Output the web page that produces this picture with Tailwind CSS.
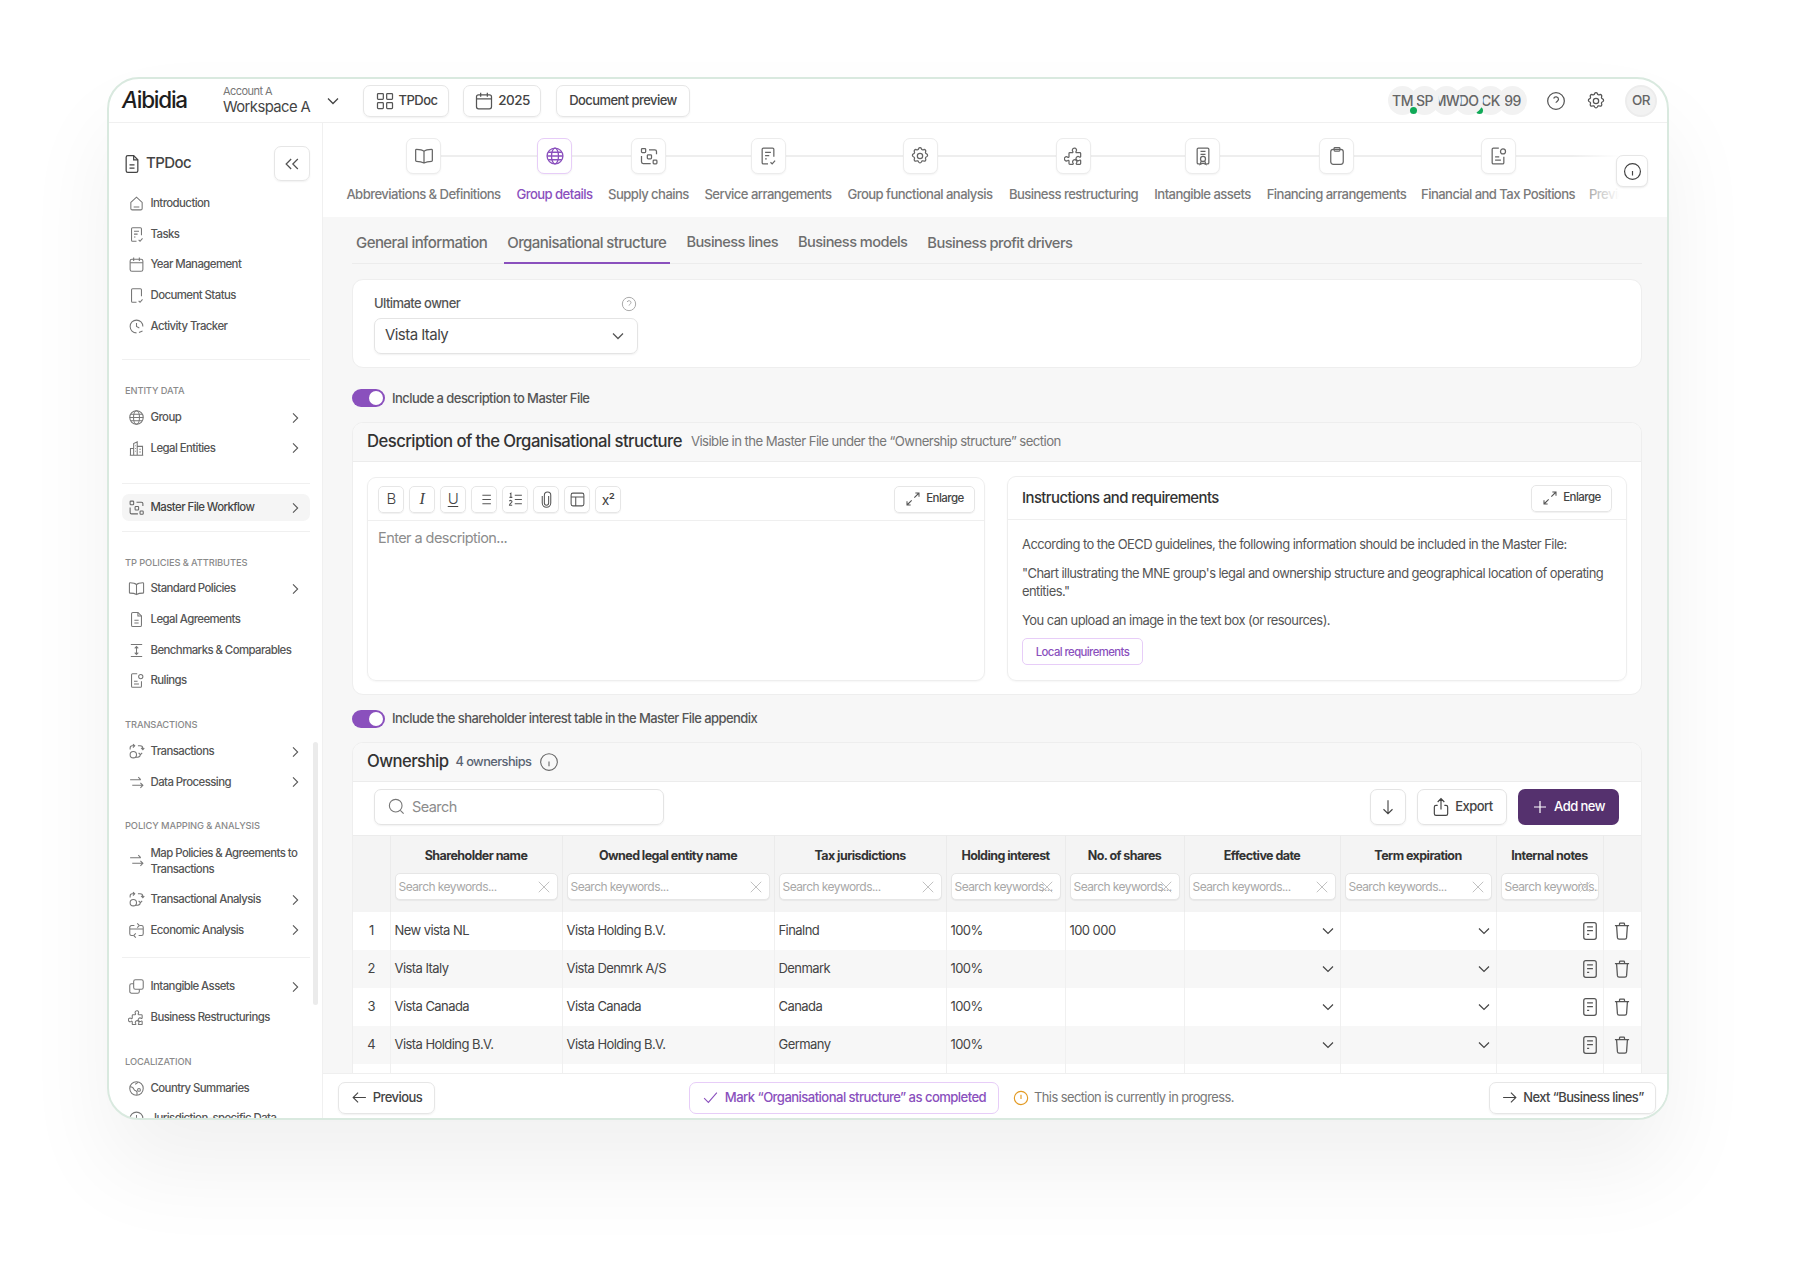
<!DOCTYPE html>
<html lang="en">
<head>
  <meta charset="UTF-8">
  <title>TPDoc - Organisational structure</title>
  <script src="https://cdn.jsdelivr.net/npm/@tailwindcss/browser@4"></script>
</head>
<body class="bg-white font-['Inter',sans-serif] tracking-[-0.035em] text-[#444] w-[1800px] h-[1282px] overflow-hidden pt-[77px] pl-[107px]">

  <!-- icon sprite -->
  <svg class="hidden" fill="none" stroke="currentColor" stroke-width="1.6" stroke-linecap="round" stroke-linejoin="round">
    <symbol id="i-grid" viewBox="0 0 24 24"><rect x="3" y="3" width="7" height="7" rx="1"/><rect x="14" y="3" width="7" height="7" rx="1"/><rect x="3" y="14" width="7" height="7" rx="1"/><rect x="14" y="14" width="7" height="7" rx="1"/></symbol>
    <symbol id="i-cal" viewBox="0 0 24 24"><rect x="3" y="4.5" width="18" height="17" rx="2.5"/><path d="M8 2v5M16 2v5M3 9.5h18"/></symbol>
    <symbol id="i-down" viewBox="0 0 24 24"><path d="M6 9l6 6 6-6"/></symbol>
    <symbol id="i-right" viewBox="0 0 24 24"><path d="M9 5l7 7-7 7"/></symbol>
    <symbol id="i-chevs" viewBox="0 0 24 24"><path d="M11 6l-6 6 6 6M19 6l-6 6 6 6"/></symbol>
    <symbol id="i-file" viewBox="0 0 24 24"><path d="M14 2H7a2 2 0 0 0-2 2v16a2 2 0 0 0 2 2h10a2 2 0 0 0 2-2V7z"/><path d="M14 2v5h5M9 13h6M9 17h6"/></symbol>
    <symbol id="i-home" viewBox="0 0 24 24"><path d="M4 10.5 12 3l8 7.5V19a2 2 0 0 1-2 2H6a2 2 0 0 1-2-2z"/><path d="M8 17h8"/></symbol>
    <symbol id="i-tasks" viewBox="0 0 24 24"><path d="M19 13V4a1.5 1.5 0 0 0-1.500-1.500H6.500A1.500 1.500 0 0 0 5 4v16a1.500 1.500 0 0 0 1.500 1.500H12"/><path d="M8.500 7.500h7M8.500 11.500h5M8.500 15.500h2M15 19.500l2 2 3.500-4"/></symbol>
    <symbol id="i-status" viewBox="0 0 24 24"><path d="M19 13V4a1.500 1.500 0 0 0-1.500-1.500H6.500A1.500 1.500 0 0 0 5 4v16a1.500 1.500 0 0 0 1.500 1.500H12"/><path d="M15 19.500l2 2 3.500-4"/></symbol>
    <symbol id="i-clock" viewBox="0 0 24 24"><path d="M21 12a9 9 0 1 0-9 9"/><path d="M12 7v5l4 2M15.500 20.500l5-2"/></symbol>
    <symbol id="i-globe" viewBox="0 0 24 24"><circle cx="12" cy="12" r="9.500"/><ellipse cx="12" cy="12" rx="4.200" ry="9.500"/><path d="M2.500 12h19M3.800 7.500h16.400M3.800 16.500h16.400"/></symbol>
    <symbol id="i-build" viewBox="0 0 24 24"><path d="M2.500 21.500h19M8 21.500V5l5-2.500v19M13 9h7.500v12.500M8 12H3.500v9.500M10 8h1M10 12h1M10 16h1M16 13h2M16 17h2"/></symbol>
    <symbol id="i-flow" viewBox="0 0 24 24"><rect x="3" y="3" width="5" height="5" rx="1"/><rect x="10" y="10.500" width="5" height="5" rx="1"/><rect x="17" y="17" width="4.500" height="4.500" rx="1"/><path d="M12 4.500h7a2 2 0 0 1 2 2V10M3 12v7a2 2 0 0 0 2 2h9"/></symbol>
    <symbol id="i-book" viewBox="0 0 24 24"><path d="M12 6.500C10 4.500 7 4 3 4a1 1 0 0 0-1 1v12.500a1 1 0 0 0 1 1c3.500 0 6.500.5 9 2 2.500-1.500 5.500-2 9-2a1 1 0 0 0 1-1V5a1 1 0 0 0-1-1c-4 0-7 .5-9 2.500zM12 6.500v14"/></symbol>
    <symbol id="i-bench" viewBox="0 0 24 24"><path d="M4 3.500h16M4 20.500h16M12 7v10M9.500 9 12 6.500 14.500 9M9.500 15l2.500 2.500 2.500-2.500"/></symbol>
    <symbol id="i-ruling" viewBox="0 0 24 24"><path d="M13 2.500H6.500A1.500 1.500 0 0 0 5 4v16a1.500 1.500 0 0 0 1.500 1.500h11A1.500 1.500 0 0 0 19 20V13"/><circle cx="18" cy="6.500" r="3"/><path d="M8.500 13h5M8.500 17h7"/></symbol>
    <symbol id="i-trans" viewBox="0 0 24 24"><circle cx="7.500" cy="16.500" r="4.500"/><path d="M14 4h3a4 4 0 0 1 4 4v1M18.500 7 21 9.500 23 7M10 20h3.500a4 4 0 0 0 4-4M3 9V7a3 3 0 0 1 3-3h3M7 1.500 9.500 4 7 6.500M20 14l-2.500 2.500L15 14"/></symbol>
    <symbol id="i-arrows" viewBox="0 0 24 24"><path d="M3 8h15M14.500 4.500 18 8M6 16h15M17.500 12.500 21 16l-3.500 3.500"/></symbol>
    <symbol id="i-econ" viewBox="0 0 24 24"><path d="M9 5H5a2.500 2.500 0 0 0-2.500 2.500v9A2.500 2.500 0 0 0 5 19h2M15 19h4a2.500 2.500 0 0 0 2.500-2.500v-9A2.500 2.500 0 0 0 19 5h-2M2.500 10h19M13 2l3 3-3 3M11 16l-3 3 3 3"/></symbol>
    <symbol id="i-copy" viewBox="0 0 24 24"><rect x="8" y="2.500" width="13.500" height="13.500" rx="2.500"/><path d="M8 8H5a2.500 2.500 0 0 0-2.500 2.500V19A2.500 2.500 0 0 0 5 21.500h8.500A2.500 2.500 0 0 0 16 19v-3"/></symbol>
    <symbol id="i-puzzle" viewBox="0 0 24 24"><path d="M10 5a2.500 2.500 0 1 1 4.500 1.500c-.4.6-.2 1.500.6 1.500H19a1 1 0 0 1 1 1v3.500c0 .8-.9 1.100-1.500.6a2.500 2.500 0 1 0 0 4c.6-.5 1.500-.2 1.500.6V21a1 1 0 0 1-1 1h-3.500c-.8 0-1.100-.9-.6-1.500a2.500 2.500 0 1 0-4 0c.5.6.2 1.500-.6 1.500H7a1 1 0 0 1-1-1v-3c0-.8-.9-1.100-1.500-.6a2.500 2.500 0 1 1 0-4c.6.5 1.500.2 1.500-.6V9a1 1 0 0 1 1-1h2.900c.8 0 1-.9.6-1.500A2.500 2.500 0 0 1 10 5z"/></symbol>
    <symbol id="i-country" viewBox="0 0 24 24"><circle cx="12" cy="12" r="9.500"/><path d="M3 9.500c3 0 4.500 1 5 3s2 2.500 3.500 3 1.500 3 1 5.500M14 3c-1 2-2.500 2.500-4 3"/><circle cx="15.500" cy="14" r="2"/></symbol>
    <symbol id="i-cert" viewBox="0 0 24 24"><path d="M8 21.500H6.500A1.500 1.500 0 0 1 5 20V4a1.500 1.500 0 0 1 1.500-1.500h11A1.500 1.500 0 0 1 19 4v16a1.500 1.500 0 0 1-1.500 1.500H16"/><path d="M9 6.500h6M9 10h6"/><circle cx="12" cy="15.500" r="3"/><path d="m10 18-1.500 4 3.500-1.500 3.500 1.500L14 18"/></symbol>
    <symbol id="i-clip" viewBox="0 0 24 24"><rect x="4.500" y="4" width="15" height="18" rx="3"/><rect x="8.500" y="2" width="7" height="4" rx="1"/></symbol>
    <symbol id="i-gear" viewBox="0 0 24 24"><circle cx="12" cy="12" r="3.200"/><path d="M10.300 3.300a1.800 1.800 0 0 1 3.400 0 1.800 1.800 0 0 0 2.700 1.100 1.800 1.800 0 0 1 2.400 2.400 1.800 1.800 0 0 0 1.100 2.700 1.800 1.800 0 0 1 0 3.400 1.800 1.800 0 0 0-1.100 2.700 1.800 1.800 0 0 1-2.400 2.400 1.800 1.800 0 0 0-2.700 1.100 1.800 1.800 0 0 1-3.400 0 1.800 1.800 0 0 0-2.700-1.100 1.800 1.800 0 0 1-2.400-2.400 1.800 1.800 0 0 0-1.100-2.700 1.800 1.800 0 0 1 0-3.400 1.800 1.800 0 0 0 1.100-2.700 1.800 1.800 0 0 1 2.400-2.400 1.800 1.800 0 0 0 2.700-1.100z"/></symbol>
    <symbol id="i-help" viewBox="0 0 24 24"><circle cx="12" cy="12" r="10"/><path d="M9.200 9a3 3 0 0 1 5.800 1c0 2-3 2.800-3 4.200M12 17.500h.01"/></symbol>
    <symbol id="i-info" viewBox="0 0 24 24"><circle cx="12" cy="12" r="10"/><path d="M12 11.500v5.500M12 7.500h.01"/></symbol>
    <symbol id="i-list" viewBox="0 0 24 24"><path d="M9 6h12M9 12h12M9 18h12M4 6h.01M4 12h.01M4 18h.01"/></symbol>
    <symbol id="i-olist" viewBox="0 0 24 24"><path d="M11 6h10M11 12h10M11 18h10M4 4l1.500-1v6M3.500 9h4M3.500 14.500a1.800 1.800 0 0 1 3.500.5c0 1.500-3.500 3-3.500 5h3.800"/></symbol>
    <symbol id="i-attach" viewBox="0 0 24 24"><path d="M15 7v10a3 3 0 0 1-6 0V6a4.500 4.500 0 0 1 9 0v11a6 6 0 0 1-12 0V7"/></symbol>
    <symbol id="i-table" viewBox="0 0 24 24"><rect x="3" y="3" width="18" height="18" rx="2.500"/><path d="M3 8.500h18M9.500 8.500V21"/></symbol>
    <symbol id="i-expand" viewBox="0 0 24 24"><path d="M14 10l7-7M15.500 3H21v5.500M10 14l-7 7M8.500 21H3v-5.500"/></symbol>
    <symbol id="i-search" viewBox="0 0 24 24"><circle cx="11" cy="11" r="8"/><path d="m21 21-4.200-4.200"/></symbol>
    <symbol id="i-x" viewBox="0 0 24 24"><path d="M5 5l14 14M19 5 5 19"/></symbol>
    <symbol id="i-adown" viewBox="0 0 24 24"><path d="M12 3v18M6 15l6 6 6-6"/></symbol>
    <symbol id="i-share" viewBox="0 0 24 24"><path d="M8 10H6a2 2 0 0 0-2 2v8a2 2 0 0 0 2 2h12a2 2 0 0 0 2-2v-8a2 2 0 0 0-2-2h-2M12 15V2M8 6l4-4 4 4"/></symbol>
    <symbol id="i-plus" viewBox="0 0 24 24"><path d="M12 3v18M3 12h18"/></symbol>
    <symbol id="i-note" viewBox="0 0 24 24"><rect x="4.500" y="2" width="15" height="20" rx="2.500"/><path d="M8.500 7h7M8.500 11.500h7M8.500 16h2.500"/></symbol>
    <symbol id="i-trash" viewBox="0 0 24 24"><path d="M3.500 5.500h17M9 5.500V3.500a1 1 0 0 1 1-1h4a1 1 0 0 1 1 1v2M5.500 5.500 6.500 20a2 2 0 0 0 2 1.800h7a2 2 0 0 0 2-1.800l1-14.500"/></symbol>
    <symbol id="i-aleft" viewBox="0 0 24 24"><path d="M21 12H3M10 5l-7 7 7 7"/></symbol>
    <symbol id="i-aright" viewBox="0 0 24 24"><path d="M3 12h18M14 5l7 7-7 7"/></symbol>
    <symbol id="i-check" viewBox="0 0 24 24"><path d="M3 13l6 6L21 5"/></symbol>
    <symbol id="i-alert" viewBox="0 0 24 24"><circle cx="12" cy="12" r="10"/><path d="M12 7v6.500M12 17h.01"/></symbol>
  </svg>

  <!-- app frame -->
  <div class="w-[1562px] h-[1043px] rounded-[32px] border-2 border-[#d9e9df] bg-white overflow-hidden flex flex-col shadow-[0_50px_90px_rgba(0,0,0,0.06)]">

    <!-- top bar -->
    <header class="h-[44px] shrink-0 border-b border-[#f0f0f0] flex items-center">
      <div class="w-[114px] pl-[13px] text-[22.500px] leading-none font-medium text-[#1e1e1e] tracking-[-0.055em]"><span class="italic">A</span>ibidia</div>
      <div class="w-[100px]">
        <div class="text-[11px] leading-[13px] text-[#777]">Account A</div>
        <div class="text-[14.800px] leading-[19px] text-[#444] whitespace-nowrap">Workspace A</div>
      </div>
      <svg class="w-[20px] h-[20px] text-[#444]" fill="none" stroke="currentColor" stroke-width="1.500"><use href="#i-down"/></svg>
      <button class="ml-[20px] w-[86px] h-[32px] rounded-[7px] border border-[#e6e6e6] shadow-[0_1px_2px_rgba(0,0,0,0.06)] flex items-center justify-center gap-[4px] text-[13px] font-medium text-[#444]"><svg class="w-[20px] h-[20px] text-[#555]" fill="none" stroke="currentColor" stroke-width="1.500"><use href="#i-grid"/></svg>TPDoc</button>
      <button class="ml-[14px] w-[78px] h-[32px] rounded-[7px] border border-[#e6e6e6] shadow-[0_1px_2px_rgba(0,0,0,0.06)] flex items-center justify-center gap-[4px] text-[13.500px] font-medium text-[#444]"><svg class="w-[20px] h-[20px] text-[#555]" fill="none" stroke="currentColor" stroke-width="1.500"><use href="#i-cal"/></svg>2025</button>
      <button class="ml-[15px] w-[134px] h-[32px] rounded-[7px] border border-[#e6e6e6] shadow-[0_1px_2px_rgba(0,0,0,0.06)] text-[13px] font-medium text-[#444]">Document preview</button>

      <div class="ml-auto flex items-center pr-[10px]">
        <div class="flex">
          <div class="relative z-[6] w-[29px] h-[29px] rounded-full bg-[#f2f2f2] flex items-center justify-center text-[14px] font-medium text-[#666]">TM<span class="absolute left-[22px] top-[21px] w-[7px] h-[7px] rounded-full bg-[#10a957]"></span></div>
          <div class="relative z-[5] -ml-[7px] w-[29px] h-[29px] rounded-full bg-[#f2f2f2] flex items-center justify-center overflow-hidden text-[14px] font-medium text-[#666]">SP</div>
          <div class="relative z-[4] -ml-[7px] w-[29px] h-[29px] rounded-full bg-[#f2f2f2] flex items-center justify-center overflow-hidden text-[14px] font-medium text-[#666]">MW</div>
          <div class="relative z-[3] -ml-[7px] w-[29px] h-[29px] rounded-full bg-[#f2f2f2] flex items-center justify-center overflow-hidden text-[14px] font-medium text-[#666]">DO</div>
          <div class="relative z-[2] -ml-[7px] w-[29px] h-[29px] rounded-full bg-[#f2f2f2] flex items-center justify-center text-[14px] font-medium text-[#666]">CK<span class="absolute left-[0px] top-[21px] w-[7px] h-[7px] rounded-full bg-[#10a957]"></span></div>
          <div class="relative z-[1] -ml-[7px] w-[29px] h-[29px] rounded-full bg-[#f2f2f2] flex items-center justify-center text-[14px] font-medium text-[#666]">99</div>
        </div>
        <svg class="ml-[19px] w-[20px] h-[20px] text-[#555]" fill="none" stroke="currentColor" stroke-width="1.500"><use href="#i-help"/></svg>
        <svg class="ml-[20px] w-[20px] h-[20px] text-[#555]" fill="none" stroke="currentColor" stroke-width="1.500"><use href="#i-gear"/></svg>
        <div class="ml-[19px] w-[32px] h-[32px] rounded-full bg-[#f2f2f2] border-2 border-[#ececec] flex items-center justify-center text-[13.500px] font-medium text-[#666]">OR</div>
      </div>
    </header>

    <div class="flex flex-1 min-h-0">

      <!-- sidebar -->
      <aside class="relative w-[214px] shrink-0 border-r border-[#f0f0f0] pl-[13px] pr-[12px] overflow-hidden">
        <div class="flex items-center justify-between pt-[23px]">
          <div class="flex items-center gap-[4px] text-[15px] font-medium text-[#444]"><svg class="w-[20px] h-[20px] text-[#444]" fill="none" stroke="currentColor" stroke-width="1.500"><use href="#i-file"/></svg>TPDoc</div>
          <button class="w-[36px] h-[35px] rounded-[7px] border border-[#e6e6e6] shadow-[0_1px_2px_rgba(0,0,0,0.06)] flex items-center justify-center"><svg class="w-[20px] h-[20px] text-[#555]" fill="none" stroke="currentColor" stroke-width="1.500"><use href="#i-chevs"/></svg></button>
        </div>
        <nav class="mt-[7px] text-[11.400px] font-medium text-[#555]">
          <div class="flex items-center h-[30.750px] pl-[5.500px] gap-[6px]"><svg class="w-[17px] h-[17px] text-[#777]" fill="none" stroke="currentColor" stroke-width="1.500"><use href="#i-home"/></svg>Introduction</div>
          <div class="flex items-center h-[30.750px] pl-[5.500px] gap-[6px]"><svg class="w-[17px] h-[17px] text-[#777]" fill="none" stroke="currentColor" stroke-width="1.500"><use href="#i-tasks"/></svg>Tasks</div>
          <div class="flex items-center h-[30.750px] pl-[5.500px] gap-[6px]"><svg class="w-[17px] h-[17px] text-[#777]" fill="none" stroke="currentColor" stroke-width="1.500"><use href="#i-cal"/></svg>Year Management</div>
          <div class="flex items-center h-[30.750px] pl-[5.500px] gap-[6px]"><svg class="w-[17px] h-[17px] text-[#777]" fill="none" stroke="currentColor" stroke-width="1.500"><use href="#i-status"/></svg>Document Status</div>
          <div class="flex items-center h-[30.750px] pl-[5.500px] gap-[6px]"><svg class="w-[17px] h-[17px] text-[#777]" fill="none" stroke="currentColor" stroke-width="1.500"><use href="#i-clock"/></svg>Activity Tracker</div>

          <div class="mt-[17px] h-[1px] bg-[#f0f0f0]"></div>
          <div class="mt-[25px] pl-[3px] h-[12px] leading-[12px] text-[9.300px] font-medium text-[#8a8a8a] tracking-[-0.01em]">ENTITY DATA</div>
          <div class="mt-[5.500px] flex items-center h-[30.750px] pl-[5.500px] pr-[7px] gap-[6px]"><svg class="w-[17px] h-[17px] text-[#777]" fill="none" stroke="currentColor" stroke-width="1.500"><use href="#i-globe"/></svg>Group<svg class="ml-auto w-[16px] h-[16px] text-[#555]" fill="none" stroke="currentColor" stroke-width="1.600"><use href="#i-right"/></svg></div>
          <div class="flex items-center h-[30.750px] pl-[5.500px] pr-[7px] gap-[6px]"><svg class="w-[17px] h-[17px] text-[#777]" fill="none" stroke="currentColor" stroke-width="1.500"><use href="#i-build"/></svg>Legal Entities<svg class="ml-auto w-[16px] h-[16px] text-[#555]" fill="none" stroke="currentColor" stroke-width="1.600"><use href="#i-right"/></svg></div>

          <div class="mt-[19.500px] h-[1px] bg-[#f0f0f0]"></div>
          <div class="mt-[10px] flex items-center h-[27px] pl-[5.500px] pr-[7px] gap-[6px] rounded-[7px] bg-[#f5f5f5] text-[#444]"><svg class="w-[17px] h-[17px] text-[#666]" fill="none" stroke="currentColor" stroke-width="1.500"><use href="#i-flow"/></svg>Master File Workflow<svg class="ml-auto w-[16px] h-[16px] text-[#555]" fill="none" stroke="currentColor" stroke-width="1.600"><use href="#i-right"/></svg></div>
          <div class="mt-[10px] h-[1px] bg-[#f0f0f0]"></div>

          <div class="mt-[25px] pl-[3px] h-[12px] leading-[12px] text-[9.300px] font-medium text-[#8a8a8a] tracking-[-0.01em]">TP POLICIES &amp; ATTRIBUTES</div>
          <div class="mt-[4px] flex items-center h-[30.750px] pl-[5.500px] pr-[7px] gap-[6px]"><svg class="w-[17px] h-[17px] text-[#777]" fill="none" stroke="currentColor" stroke-width="1.500"><use href="#i-book"/></svg>Standard Policies<svg class="ml-auto w-[16px] h-[16px] text-[#555]" fill="none" stroke="currentColor" stroke-width="1.600"><use href="#i-right"/></svg></div>
          <div class="flex items-center h-[30.750px] pl-[5.500px] gap-[6px]"><svg class="w-[17px] h-[17px] text-[#777]" fill="none" stroke="currentColor" stroke-width="1.500"><use href="#i-file"/></svg>Legal Agreements</div>
          <div class="flex items-center h-[30.750px] pl-[5.500px] gap-[6px]"><svg class="w-[17px] h-[17px] text-[#777]" fill="none" stroke="currentColor" stroke-width="1.500"><use href="#i-bench"/></svg>Benchmarks &amp; Comparables</div>
          <div class="flex items-center h-[30.750px] pl-[5.500px] gap-[6px]"><svg class="w-[17px] h-[17px] text-[#777]" fill="none" stroke="currentColor" stroke-width="1.500"><use href="#i-ruling"/></svg>Rulings</div>

          <div class="mt-[23px] pl-[3px] h-[12px] leading-[12px] text-[9.300px] font-medium text-[#8a8a8a] tracking-[-0.01em]">TRANSACTIONS</div>
          <div class="mt-[5px] flex items-center h-[30.750px] pl-[5.500px] pr-[7px] gap-[6px]"><svg class="w-[17px] h-[17px] text-[#777]" fill="none" stroke="currentColor" stroke-width="1.500"><use href="#i-trans"/></svg>Transactions<svg class="ml-auto w-[16px] h-[16px] text-[#555]" fill="none" stroke="currentColor" stroke-width="1.600"><use href="#i-right"/></svg></div>
          <div class="flex items-center h-[30.750px] pl-[5.500px] pr-[7px] gap-[6px]"><svg class="w-[17px] h-[17px] text-[#777]" fill="none" stroke="currentColor" stroke-width="1.500"><use href="#i-arrows"/></svg>Data Processing<svg class="ml-auto w-[16px] h-[16px] text-[#555]" fill="none" stroke="currentColor" stroke-width="1.600"><use href="#i-right"/></svg></div>

          <div class="mt-[22px] pl-[3px] h-[12px] leading-[12px] text-[9.300px] font-medium text-[#8a8a8a] tracking-[-0.01em]">POLICY MAPPING &amp; ANALYSIS</div>
          <div class="flex items-center h-[47.500px] pl-[5.500px] gap-[6px] mt-[5px] leading-[16px]"><svg class="w-[17px] h-[17px] shrink-0 text-[#777]" fill="none" stroke="currentColor" stroke-width="1.500"><use href="#i-arrows"/></svg><span>Map Policies &amp; Agreements to<br>Transactions</span></div>
          <div class="flex items-center h-[30.750px] pl-[5.500px] pr-[7px] gap-[6px]"><svg class="w-[17px] h-[17px] text-[#777]" fill="none" stroke="currentColor" stroke-width="1.500"><use href="#i-trans"/></svg>Transactional Analysis<svg class="ml-auto w-[16px] h-[16px] text-[#555]" fill="none" stroke="currentColor" stroke-width="1.600"><use href="#i-right"/></svg></div>
          <div class="flex items-center h-[30.750px] pl-[5.500px] pr-[7px] gap-[6px]"><svg class="w-[17px] h-[17px] text-[#777]" fill="none" stroke="currentColor" stroke-width="1.500"><use href="#i-econ"/></svg>Economic Analysis<svg class="ml-auto w-[16px] h-[16px] text-[#555]" fill="none" stroke="currentColor" stroke-width="1.600"><use href="#i-right"/></svg></div>

          <div class="mt-[11px] h-[1px] bg-[#f0f0f0]"></div>
          <div class="mt-[13.500px] flex items-center h-[30.750px] pl-[5.500px] pr-[7px] gap-[6px]"><svg class="w-[17px] h-[17px] text-[#777]" fill="none" stroke="currentColor" stroke-width="1.500"><use href="#i-copy"/></svg>Intangible Assets<svg class="ml-auto w-[16px] h-[16px] text-[#555]" fill="none" stroke="currentColor" stroke-width="1.600"><use href="#i-right"/></svg></div>
          <div class="flex items-center h-[30.750px] pl-[5.500px] gap-[6px]"><svg class="w-[17px] h-[17px] text-[#777]" fill="none" stroke="currentColor" stroke-width="1.500"><use href="#i-puzzle"/></svg>Business Restructurings</div>

          <div class="mt-[23px] pl-[3px] h-[12px] leading-[12px] text-[9.300px] font-medium text-[#8a8a8a] tracking-[-0.01em]">LOCALIZATION</div>
          <div class="mt-[5px] flex items-center h-[30.750px] pl-[5.500px] gap-[6px]"><svg class="w-[17px] h-[17px] text-[#777]" fill="none" stroke="currentColor" stroke-width="1.500"><use href="#i-country"/></svg>Country Summaries</div>
          <div class="flex items-center h-[30.750px] pl-[5.500px] gap-[6px]"><svg class="w-[17px] h-[17px] text-[#777]" fill="none" stroke="currentColor" stroke-width="1.500"><use href="#i-clock"/></svg>Jurisdiction-specific Data</div>
        </nav>
        <!-- scrollbar thumb -->
        <div class="absolute right-[4px] top-[619px] w-[5px] h-[263px] rounded-full bg-[#ebebeb]"></div>
      </aside>

      <!-- main column -->
      <div class="flex-1 min-w-0 flex flex-col">

        <!-- stepper -->
        <div class="relative h-[94px] shrink-0 bg-white pl-[23px] pt-[15px] flex gap-[15px] overflow-hidden text-[13.100px] font-medium text-[#7a7a7a] whitespace-nowrap">
          <div class="absolute left-[100px] right-[20px] top-[32px] h-[2px] bg-[#eeeeee]"></div>
          <div class="relative shrink-0 w-[155px] flex flex-col items-center gap-[11px]"><div class="w-[35px] h-[36px] rounded-[7px] bg-white border border-[#ececec] shadow-[0_1px_2px_rgba(0,0,0,0.05)] flex items-center justify-center"><svg class="w-[20px] h-[20px] text-[#666]" fill="none" stroke="currentColor" stroke-width="1.500"><use href="#i-book"/></svg></div>Abbreviations &amp; Definitions</div>
          <div class="relative shrink-0 w-[77px] flex flex-col items-center gap-[11px] text-[#8a50bd]"><div class="w-[35px] h-[36px] rounded-[7px] bg-white border border-[#e7cdf8] shadow-[0_1px_2px_rgba(0,0,0,0.05)] flex items-center justify-center"><svg class="w-[20px] h-[20px] text-[#8a50bd]" fill="none" stroke="currentColor" stroke-width="1.600"><use href="#i-globe"/></svg></div>Group details</div>
          <div class="relative shrink-0 w-[81px] flex flex-col items-center gap-[11px]"><div class="w-[35px] h-[36px] rounded-[7px] bg-white border border-[#ececec] shadow-[0_1px_2px_rgba(0,0,0,0.05)] flex items-center justify-center"><svg class="w-[20px] h-[20px] text-[#666]" fill="none" stroke="currentColor" stroke-width="1.500"><use href="#i-flow"/></svg></div>Supply chains</div>
          <div class="relative shrink-0 w-[128px] flex flex-col items-center gap-[11px]"><div class="w-[35px] h-[36px] rounded-[7px] bg-white border border-[#ececec] shadow-[0_1px_2px_rgba(0,0,0,0.05)] flex items-center justify-center"><svg class="w-[20px] h-[20px] text-[#666]" fill="none" stroke="currentColor" stroke-width="1.500"><use href="#i-tasks"/></svg></div>Service arrangements</div>
          <div class="relative shrink-0 w-[146px] flex flex-col items-center gap-[11px]"><div class="w-[35px] h-[36px] rounded-[7px] bg-white border border-[#ececec] shadow-[0_1px_2px_rgba(0,0,0,0.05)] flex items-center justify-center"><svg class="w-[20px] h-[20px] text-[#666]" fill="none" stroke="currentColor" stroke-width="1.500"><use href="#i-gear"/></svg></div>Group functional analysis</div>
          <div class="relative shrink-0 w-[131px] flex flex-col items-center gap-[11px]"><div class="w-[35px] h-[36px] rounded-[7px] bg-white border border-[#ececec] shadow-[0_1px_2px_rgba(0,0,0,0.05)] flex items-center justify-center"><svg class="w-[20px] h-[20px] text-[#666]" fill="none" stroke="currentColor" stroke-width="1.500"><use href="#i-puzzle"/></svg></div>Business restructuring</div>
          <div class="relative shrink-0 w-[97px] flex flex-col items-center gap-[11px]"><div class="w-[35px] h-[36px] rounded-[7px] bg-white border border-[#ececec] shadow-[0_1px_2px_rgba(0,0,0,0.05)] flex items-center justify-center"><svg class="w-[20px] h-[20px] text-[#666]" fill="none" stroke="currentColor" stroke-width="1.500"><use href="#i-cert"/></svg></div>Intangible assets</div>
          <div class="relative shrink-0 w-[141px] flex flex-col items-center gap-[11px]"><div class="w-[35px] h-[36px] rounded-[7px] bg-white border border-[#ececec] shadow-[0_1px_2px_rgba(0,0,0,0.05)] flex items-center justify-center"><svg class="w-[20px] h-[20px] text-[#666]" fill="none" stroke="currentColor" stroke-width="1.500"><use href="#i-clip"/></svg></div>Financing arrangements</div>
          <div class="relative shrink-0 w-[152px] flex flex-col items-center gap-[11px]"><div class="w-[35px] h-[36px] rounded-[7px] bg-white border border-[#ececec] shadow-[0_1px_2px_rgba(0,0,0,0.05)] flex items-center justify-center"><svg class="w-[20px] h-[20px] text-[#666]" fill="none" stroke="currentColor" stroke-width="1.500"><use href="#i-ruling"/></svg></div>Financial and Tax Positions</div>
          <div class="relative shrink-0 pt-[47px]">Previous</div>
          <!-- right fade and info button sit over the scrolling steps -->
          <div class="absolute right-0 top-0 bottom-0 w-[95px] bg-gradient-to-r from-transparent via-white to-white"></div>
          <button class="absolute left-[1293px] top-[32px] w-[32px] h-[32px] rounded-[7px] bg-white border border-[#e6e6e6] shadow-[0_1px_2px_rgba(0,0,0,0.08)] flex items-center justify-center"><svg class="w-[19px] h-[19px] text-[#444]" fill="none" stroke="currentColor" stroke-width="1.500"><use href="#i-info"/></svg></button>
        </div>

        <!-- scrolling content -->
        <div class="flex-1 min-h-0 bg-[#f7f7f7] pl-[29px] pr-[25px] overflow-hidden">
          <div class="h-[47px] flex items-end gap-[20px] border-b border-[#ececec] text-[15px] font-medium text-[#6e6e6e] pl-[4px] whitespace-nowrap">
            <div class="pb-[9px]">General information</div>
            <div class="relative pb-[9px]">Organisational structure<span class="absolute -left-[3px] -right-[4px] -bottom-[1px] h-[2px] bg-[#8a50bd]"></span></div>
            <div class="pb-[9px] text-[14.600px]">Business lines</div>
            <div class="pb-[9px] text-[14.600px]">Business models</div>
            <div class="pb-[9px] text-[14.700px]">Business profit drivers</div>
          </div>

          <!-- ultimate owner -->
          <div class="mt-[15px] h-[89px] rounded-[11px] bg-white border border-[#eeeeee] pl-[21px] pt-[15px]">
            <div class="w-[263px] flex items-center justify-between h-[18px] text-[13px] font-medium text-[#555]">Ultimate owner<svg class="w-[16px] h-[16px] text-[#aaa]" fill="none" stroke="currentColor" stroke-width="1.500"><use href="#i-help"/></svg></div>
            <div class="mt-[5px] w-[264px] h-[36px] rounded-[7px] border border-[#e4e4e4] shadow-[0_1px_2px_rgba(0,0,0,0.06)] flex items-center justify-between pl-[10px] pr-[9px] pb-[1px] text-[15px] text-[#444]">Vista Italy<svg class="w-[20px] h-[20px] text-[#555]" fill="none" stroke="currentColor" stroke-width="1.500"><use href="#i-down"/></svg></div>
          </div>

          <!-- toggle -->
          <div class="mt-[21px] h-[18px] flex items-center gap-[7px] text-[13px] font-medium text-[#555]">
            <div class="w-[33px] h-[18px] rounded-full bg-[#8a50bd] flex justify-end p-[2px]"><span class="w-[14px] h-[14px] rounded-full bg-white"></span></div><span class="pt-[1px]">Include a description to Master File</span>
          </div>

          <!-- description card -->
          <div class="mt-[15px] h-[273px] rounded-[11px] bg-white border border-[#eeeeee] overflow-hidden">
            <div class="h-[39px] bg-[#f8f8f8] border-b border-[#ececec] flex items-center pl-[14px] gap-[9px] whitespace-nowrap">
              <span class="text-[16.700px] font-medium text-[#333]">Description of the Organisational structure</span>
              <span class="text-[13.200px] text-[#777]">Visible in the Master File under the “Ownership structure” section</span>
            </div>
            <div class="flex pl-[14px] pt-[15px] gap-[22px]">
              <div class="w-[618px] h-[204px] rounded-[9px] border border-[#eeeeee] shadow-[0_1px_2px_rgba(0,0,0,0.04)]">
                <div class="h-[43px] border-b border-[#efefef] flex items-center pl-[10px] pr-[9px] gap-[5px]">
                  <button class="w-[26px] h-[27px] rounded-[5px] border border-[#e6e6e6] shadow-[0_1px_1px_rgba(0,0,0,0.06)] text-[15px] font-light text-[#444]">B</button>
                  <button class="w-[26px] h-[27px] rounded-[5px] border border-[#e6e6e6] shadow-[0_1px_1px_rgba(0,0,0,0.06)] text-[16px] font-['Liberation_Serif',serif] italic text-[#444]">I</button>
                  <button class="w-[26px] h-[27px] rounded-[5px] border border-[#e6e6e6] shadow-[0_1px_1px_rgba(0,0,0,0.06)] text-[15px] font-light underline underline-offset-2 text-[#444]">U</button>
                  <button class="w-[26px] h-[27px] rounded-[5px] border border-[#e6e6e6] shadow-[0_1px_1px_rgba(0,0,0,0.06)] flex items-center justify-center"><svg class="w-[17px] h-[17px] text-[#555]" fill="none" stroke="currentColor" stroke-width="1.500"><use href="#i-list"/></svg></button>
                  <button class="w-[26px] h-[27px] rounded-[5px] border border-[#e6e6e6] shadow-[0_1px_1px_rgba(0,0,0,0.06)] flex items-center justify-center"><svg class="w-[17px] h-[17px] text-[#555]" fill="none" stroke="currentColor" stroke-width="1.500"><use href="#i-olist"/></svg></button>
                  <button class="w-[26px] h-[27px] rounded-[5px] border border-[#e6e6e6] shadow-[0_1px_1px_rgba(0,0,0,0.06)] flex items-center justify-center"><svg class="w-[17px] h-[17px] text-[#555]" fill="none" stroke="currentColor" stroke-width="1.500"><use href="#i-attach"/></svg></button>
                  <button class="w-[26px] h-[27px] rounded-[5px] border border-[#e6e6e6] shadow-[0_1px_1px_rgba(0,0,0,0.06)] flex items-center justify-center"><svg class="w-[17px] h-[17px] text-[#555]" fill="none" stroke="currentColor" stroke-width="1.500"><use href="#i-table"/></svg></button>
                  <button class="w-[26px] h-[27px] rounded-[5px] border border-[#e6e6e6] shadow-[0_1px_1px_rgba(0,0,0,0.06)] text-[14px] text-[#444]">x²</button>
                  <button class="ml-auto w-[81px] h-[27px] rounded-[5px] border border-[#e6e6e6] shadow-[0_1px_1px_rgba(0,0,0,0.06)] flex items-center justify-center gap-[5px] text-[11.500px] font-medium text-[#444]"><svg class="w-[16px] h-[16px] text-[#555]" fill="none" stroke="currentColor" stroke-width="1.600"><use href="#i-expand"/></svg>Enlarge</button>
                </div>
                <div class="pl-[10px] pt-[6px] text-[14.500px] text-[#8c8c8c]">Enter a description...</div>
              </div>
              <div class="w-[620px] h-[205px] -mt-[1px] rounded-[9px] border border-[#eeeeee] shadow-[0_1px_2px_rgba(0,0,0,0.04)]">
                <div class="h-[43px] border-b border-[#efefef] flex items-center justify-between pl-[14px] pr-[14px]">
                  <span class="text-[14.900px] font-medium text-[#333]">Instructions and requirements</span>
                  <button class="w-[81px] h-[27px] rounded-[5px] border border-[#e6e6e6] shadow-[0_1px_1px_rgba(0,0,0,0.06)] flex items-center justify-center gap-[5px] text-[11.500px] font-medium text-[#444]"><svg class="w-[16px] h-[16px] text-[#555]" fill="none" stroke="currentColor" stroke-width="1.600"><use href="#i-expand"/></svg>Enlarge</button>
                </div>
                <div class="pl-[14px] pr-[14px] pt-[15px] text-[12.970px] leading-[18px] text-[#555]">
                  <p>According to the OECD guidelines, the following information should be included in the Master File:</p>
                  <p class="mt-[11px]">"Chart illustrating the MNE group's legal and ownership structure and geographical location of operating entities."</p>
                  <p class="mt-[11px]">You can upload an image in the text box (or resources).</p>
                  <button class="mt-[9px] w-[121px] h-[27px] rounded-[5px] border border-[#e7cdf8] text-[11.300px] font-medium text-[#8a50bd]">Local requirements</button>
                </div>
              </div>
            </div>
          </div>

          <!-- toggle -->
          <div class="mt-[15px] h-[18px] flex items-center gap-[7px] text-[13px] font-medium text-[#555]">
            <div class="w-[33px] h-[18px] rounded-full bg-[#8a50bd] flex justify-end p-[2px]"><span class="w-[14px] h-[14px] rounded-full bg-white"></span></div>Include the shareholder interest table in the Master File appendix
          </div>

          <!-- ownership card -->
          <div class="mt-[14px] rounded-t-[11px] bg-white border border-[#eeeeee] overflow-hidden">
            <div class="h-[39px] bg-[#f8f8f8] border-b border-[#ececec] flex items-center pl-[14px] gap-[7px]">
              <span class="text-[16.700px] font-medium text-[#333]">Ownership</span>
              <span class="text-[12.800px] font-medium text-[#5a6473]">4 ownerships</span>
              <svg class="ml-[1px] w-[20px] h-[20px] text-[#666]" fill="none" stroke="currentColor" stroke-width="1.300"><use href="#i-info"/></svg>
            </div>
            <div class="h-[53px] flex items-center pl-[21px] pr-[22px] pb-[4px]">
              <div class="w-[290px] h-[36px] rounded-[7px] border border-[#e4e4e4] shadow-[0_1px_2px_rgba(0,0,0,0.06)] flex items-center pl-[12px] gap-[6px] text-[14.500px] text-[#8c8c8c]"><svg class="w-[19px] h-[19px] text-[#777]" fill="none" stroke="currentColor" stroke-width="1.400"><use href="#i-search"/></svg>Search</div>
              <button class="ml-auto w-[36px] h-[36px] rounded-[7px] border border-[#e4e4e4] shadow-[0_1px_2px_rgba(0,0,0,0.06)] flex items-center justify-center"><svg class="w-[18px] h-[18px] text-[#444]" fill="none" stroke="currentColor" stroke-width="1.500"><use href="#i-adown"/></svg></button>
              <button class="ml-[11px] w-[90px] h-[36px] rounded-[7px] border border-[#e4e4e4] shadow-[0_1px_2px_rgba(0,0,0,0.06)] flex items-center justify-center gap-[4px] text-[13px] font-medium text-[#444]"><svg class="w-[20px] h-[20px] text-[#444]" fill="none" stroke="currentColor" stroke-width="1.400"><use href="#i-share"/></svg>Export</button>
              <button class="ml-[11px] w-[101px] h-[36px] rounded-[7px] bg-[#55316e] flex items-center justify-center gap-[6px] text-[13px] font-medium text-white"><svg class="w-[16px] h-[16px] text-white" fill="none" stroke="currentColor" stroke-width="1.800"><use href="#i-plus"/></svg>Add new</button>
            </div>
            <table class="w-full table-fixed border-collapse text-[13px] text-[#444]">
              <colgroup>
                <col class="w-[37px]"><col class="w-[172px]"><col class="w-[212px]"><col class="w-[172px]"><col class="w-[119px]"><col class="w-[119px]"><col class="w-[156px]"><col class="w-[156px]"><col class="w-[107px]"><col>
              </colgroup>
              <thead class="bg-[#f4f4f4] border-t border-[#ececec] text-[12.500px] font-semibold text-[#333]">
                <tr class="h-[76px] align-top">
                  <th class="border-r border-[#ebebeb]"></th>
                  <th class="border-r border-[#ebebeb] px-[4px] pt-[12px]"><div class="h-[16px] leading-[16px] mb-[9px]">Shareholder name</div><div class="h-[27px] rounded-[5px] bg-white border border-[#e6e6e6] shadow-[0_1px_1px_rgba(0,0,0,0.05)] flex items-center justify-between pl-[3px] pr-[4px] text-[12px] font-normal text-[#a8a8a8]">Search keywords...<svg class="w-[18px] h-[18px] text-[#bbb]" fill="none" stroke="currentColor" stroke-width="1.200"><use href="#i-x"/></svg></div></th>
                  <th class="border-r border-[#ebebeb] px-[4px] pt-[12px]"><div class="h-[16px] leading-[16px] mb-[9px]">Owned legal entity name</div><div class="h-[27px] rounded-[5px] bg-white border border-[#e6e6e6] shadow-[0_1px_1px_rgba(0,0,0,0.05)] flex items-center justify-between pl-[3px] pr-[4px] text-[12px] font-normal text-[#a8a8a8]">Search keywords...<svg class="w-[18px] h-[18px] text-[#bbb]" fill="none" stroke="currentColor" stroke-width="1.200"><use href="#i-x"/></svg></div></th>
                  <th class="border-r border-[#ebebeb] px-[4px] pt-[12px]"><div class="h-[16px] leading-[16px] mb-[9px]">Tax jurisdictions</div><div class="h-[27px] rounded-[5px] bg-white border border-[#e6e6e6] shadow-[0_1px_1px_rgba(0,0,0,0.05)] flex items-center justify-between pl-[3px] pr-[4px] text-[12px] font-normal text-[#a8a8a8]">Search keywords...<svg class="w-[18px] h-[18px] text-[#bbb]" fill="none" stroke="currentColor" stroke-width="1.200"><use href="#i-x"/></svg></div></th>
                  <th class="border-r border-[#ebebeb] px-[4px] pt-[12px]"><div class="h-[16px] leading-[16px] mb-[9px]">Holding interest</div><div class="relative h-[27px] rounded-[5px] bg-white border border-[#e6e6e6] shadow-[0_1px_1px_rgba(0,0,0,0.05)] flex items-center pl-[3px] text-[12px] font-normal text-[#a8a8a8] overflow-hidden whitespace-nowrap">Search keywords...<svg class="absolute right-[4px] w-[18px] h-[18px] text-[#bbb]" fill="none" stroke="currentColor" stroke-width="1.200"><use href="#i-x"/></svg></div></th>
                  <th class="border-r border-[#ebebeb] px-[4px] pt-[12px]"><div class="h-[16px] leading-[16px] mb-[9px]">No. of shares</div><div class="relative h-[27px] rounded-[5px] bg-white border border-[#e6e6e6] shadow-[0_1px_1px_rgba(0,0,0,0.05)] flex items-center pl-[3px] text-[12px] font-normal text-[#a8a8a8] overflow-hidden whitespace-nowrap">Search keywords...<svg class="absolute right-[4px] w-[18px] h-[18px] text-[#bbb]" fill="none" stroke="currentColor" stroke-width="1.200"><use href="#i-x"/></svg></div></th>
                  <th class="border-r border-[#ebebeb] px-[4px] pt-[12px]"><div class="h-[16px] leading-[16px] mb-[9px]">Effective date</div><div class="h-[27px] rounded-[5px] bg-white border border-[#e6e6e6] shadow-[0_1px_1px_rgba(0,0,0,0.05)] flex items-center justify-between pl-[3px] pr-[4px] text-[12px] font-normal text-[#a8a8a8]">Search keywords...<svg class="w-[18px] h-[18px] text-[#bbb]" fill="none" stroke="currentColor" stroke-width="1.200"><use href="#i-x"/></svg></div></th>
                  <th class="border-r border-[#ebebeb] px-[4px] pt-[12px]"><div class="h-[16px] leading-[16px] mb-[9px]">Term expiration</div><div class="h-[27px] rounded-[5px] bg-white border border-[#e6e6e6] shadow-[0_1px_1px_rgba(0,0,0,0.05)] flex items-center justify-between pl-[3px] pr-[4px] text-[12px] font-normal text-[#a8a8a8]">Search keywords...<svg class="w-[18px] h-[18px] text-[#bbb]" fill="none" stroke="currentColor" stroke-width="1.200"><use href="#i-x"/></svg></div></th>
                  <th class="border-r border-[#ebebeb] px-[4px] pt-[12px]"><div class="h-[16px] leading-[16px] mb-[9px]">Internal notes</div><div class="relative h-[27px] rounded-[5px] bg-white border border-[#e6e6e6] shadow-[0_1px_1px_rgba(0,0,0,0.05)] flex items-center pl-[3px] text-[12px] font-normal text-[#a8a8a8] overflow-hidden whitespace-nowrap">Search keywords...<svg class="absolute right-[4px] w-[18px] h-[18px] text-[#ccc]" fill="none" stroke="currentColor" stroke-width="1.200"><use href="#i-x"/></svg></div></th>
                  <th></th>
                </tr>
              </thead>
              <tbody>
                <tr class="h-[38px]">
                  <td class="border-r border-[#f0f0f0] text-center">1</td><td class="border-r border-[#f0f0f0] pl-[4px]">New vista NL</td><td class="border-r border-[#f0f0f0] pl-[4px]">Vista Holding B.V.</td><td class="border-r border-[#f0f0f0] pl-[4px]">Finalnd</td><td class="border-r border-[#f0f0f0] pl-[4px]">100%</td><td class="border-r border-[#f0f0f0] pl-[4px]">100 000</td>
                  <td class="border-r border-[#f0f0f0] pr-[2px]"><svg class="ml-auto w-[20px] h-[20px] text-[#444]" fill="none" stroke="currentColor" stroke-width="1.400"><use href="#i-down"/></svg></td><td class="border-r border-[#f0f0f0] pr-[2px]"><svg class="ml-auto w-[20px] h-[20px] text-[#444]" fill="none" stroke="currentColor" stroke-width="1.400"><use href="#i-down"/></svg></td>
                  <td class="border-r border-[#f0f0f0] pr-[3px]"><svg class="ml-auto w-[20px] h-[20px] text-[#555]" fill="none" stroke="currentColor" stroke-width="1.500"><use href="#i-note"/></svg></td><td><svg class="mx-auto w-[20px] h-[20px] text-[#555]" fill="none" stroke="currentColor" stroke-width="1.500"><use href="#i-trash"/></svg></td>
                </tr>
                <tr class="h-[38px] bg-[#f7f7f7]">
                  <td class="border-r border-[#f0f0f0] text-center">2</td><td class="border-r border-[#f0f0f0] pl-[4px]">Vista Italy</td><td class="border-r border-[#f0f0f0] pl-[4px]">Vista Denmrk A/S</td><td class="border-r border-[#f0f0f0] pl-[4px]">Denmark</td><td class="border-r border-[#f0f0f0] pl-[4px]">100%</td><td class="border-r border-[#f0f0f0]"></td>
                  <td class="border-r border-[#f0f0f0] pr-[2px]"><svg class="ml-auto w-[20px] h-[20px] text-[#444]" fill="none" stroke="currentColor" stroke-width="1.400"><use href="#i-down"/></svg></td><td class="border-r border-[#f0f0f0] pr-[2px]"><svg class="ml-auto w-[20px] h-[20px] text-[#444]" fill="none" stroke="currentColor" stroke-width="1.400"><use href="#i-down"/></svg></td>
                  <td class="border-r border-[#f0f0f0] pr-[3px]"><svg class="ml-auto w-[20px] h-[20px] text-[#555]" fill="none" stroke="currentColor" stroke-width="1.500"><use href="#i-note"/></svg></td><td><svg class="mx-auto w-[20px] h-[20px] text-[#555]" fill="none" stroke="currentColor" stroke-width="1.500"><use href="#i-trash"/></svg></td>
                </tr>
                <tr class="h-[38px]">
                  <td class="border-r border-[#f0f0f0] text-center">3</td><td class="border-r border-[#f0f0f0] pl-[4px]">Vista Canada</td><td class="border-r border-[#f0f0f0] pl-[4px]">Vista Canada</td><td class="border-r border-[#f0f0f0] pl-[4px]">Canada</td><td class="border-r border-[#f0f0f0] pl-[4px]">100%</td><td class="border-r border-[#f0f0f0]"></td>
                  <td class="border-r border-[#f0f0f0] pr-[2px]"><svg class="ml-auto w-[20px] h-[20px] text-[#444]" fill="none" stroke="currentColor" stroke-width="1.400"><use href="#i-down"/></svg></td><td class="border-r border-[#f0f0f0] pr-[2px]"><svg class="ml-auto w-[20px] h-[20px] text-[#444]" fill="none" stroke="currentColor" stroke-width="1.400"><use href="#i-down"/></svg></td>
                  <td class="border-r border-[#f0f0f0] pr-[3px]"><svg class="ml-auto w-[20px] h-[20px] text-[#555]" fill="none" stroke="currentColor" stroke-width="1.500"><use href="#i-note"/></svg></td><td><svg class="mx-auto w-[20px] h-[20px] text-[#555]" fill="none" stroke="currentColor" stroke-width="1.500"><use href="#i-trash"/></svg></td>
                </tr>
                <tr class="h-[38px] bg-[#f7f7f7]">
                  <td class="border-r border-[#f0f0f0] text-center">4</td><td class="border-r border-[#f0f0f0] pl-[4px]">Vista Holding B.V.</td><td class="border-r border-[#f0f0f0] pl-[4px]">Vista Holding B.V.</td><td class="border-r border-[#f0f0f0] pl-[4px]">Germany</td><td class="border-r border-[#f0f0f0] pl-[4px]">100%</td><td class="border-r border-[#f0f0f0]"></td>
                  <td class="border-r border-[#f0f0f0] pr-[2px]"><svg class="ml-auto w-[20px] h-[20px] text-[#444]" fill="none" stroke="currentColor" stroke-width="1.400"><use href="#i-down"/></svg></td><td class="border-r border-[#f0f0f0] pr-[2px]"><svg class="ml-auto w-[20px] h-[20px] text-[#444]" fill="none" stroke="currentColor" stroke-width="1.400"><use href="#i-down"/></svg></td>
                  <td class="border-r border-[#f0f0f0] pr-[3px]"><svg class="ml-auto w-[20px] h-[20px] text-[#555]" fill="none" stroke="currentColor" stroke-width="1.500"><use href="#i-note"/></svg></td><td><svg class="mx-auto w-[20px] h-[20px] text-[#555]" fill="none" stroke="currentColor" stroke-width="1.500"><use href="#i-trash"/></svg></td>
                </tr>
                <tr class="h-[38px]">
                  <td class="border-r border-[#f0f0f0]"></td><td class="border-r border-[#f0f0f0]"></td><td class="border-r border-[#f0f0f0]"></td><td class="border-r border-[#f0f0f0]"></td><td class="border-r border-[#f0f0f0]"></td><td class="border-r border-[#f0f0f0]"></td><td class="border-r border-[#f0f0f0]"></td><td class="border-r border-[#f0f0f0]"></td><td class="border-r border-[#f0f0f0]"></td><td></td>
                </tr>
              </tbody>
            </table>
          </div>
        </div>

        <!-- footer -->
        <footer class="h-[45px] shrink-0 bg-white border-t border-[#efefef] flex items-center pl-[15px] pr-[11px] pt-[3px] text-[13px] font-medium whitespace-nowrap">
          <button class="w-[97px] h-[32px] rounded-[7px] border border-[#e6e6e6] shadow-[0_1px_2px_rgba(0,0,0,0.06)] flex items-center justify-center gap-[5px] text-[#444]"><svg class="w-[17px] h-[17px] text-[#444]" fill="none" stroke="currentColor" stroke-width="1.500"><use href="#i-aleft"/></svg>Previous</button>
          <button class="ml-[254px] w-[310px] h-[32px] rounded-[7px] border border-[#e7cdf8] flex items-center justify-center gap-[6px] text-[13.100px] text-[#8a50bd]"><svg class="w-[17px] h-[17px] text-[#8a50bd]" fill="none" stroke="currentColor" stroke-width="1.500"><use href="#i-check"/></svg>Mark “Organisational structure” as completed</button>
          <svg class="ml-[14px] w-[16px] h-[16px] text-[#e39a22]" fill="none" stroke="currentColor" stroke-width="1.700"><use href="#i-alert"/></svg>
          <span class="ml-[5px] font-normal text-[12.900px] text-[#777]">This section is currently in progress.</span>
          <button class="ml-auto w-[167px] h-[32px] rounded-[7px] border border-[#e6e6e6] shadow-[0_1px_2px_rgba(0,0,0,0.06)] flex items-center justify-center gap-[5px] text-[12.900px] text-[#444]"><svg class="w-[17px] h-[17px] text-[#444]" fill="none" stroke="currentColor" stroke-width="1.500"><use href="#i-aright"/></svg>Next “Business lines”</button>
        </footer>
      </div>
    </div>
  </div>
</body>
</html>
